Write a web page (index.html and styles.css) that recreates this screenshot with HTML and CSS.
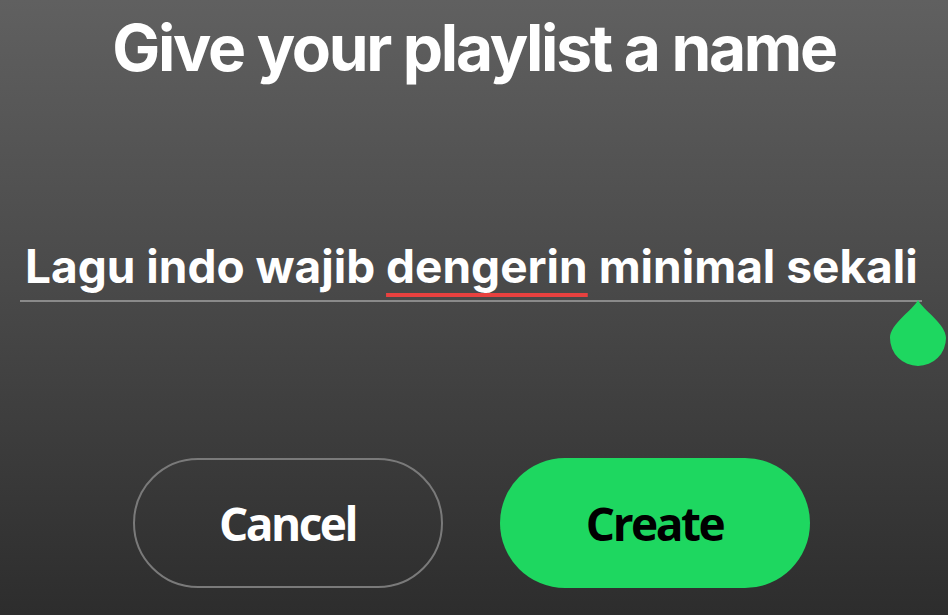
FILE: index.html
```html
<!DOCTYPE html>
<html>
<head>
<meta charset="utf-8">
<link rel="stylesheet" href="styles.css">
</head>
<body>
<main class="dialog">
  <h1 class="title">Give your playlist a name</h1>
  <div class="field">
    <div class="input-text">Lagu indo wajib <span class="misspelled">dengerin</span> minimal sekali</div>
    <div class="input-line"></div>
    <svg class="handle" width="56" height="66" viewBox="0 0 56 66">
      <path d="M28 0 C33 10 56 24 56 38 A28 28 0 0 1 0 38 C0 24 23 10 28 0 Z" fill="#1ed760"/>
    </svg>
  </div>
  <div class="actions">
    <button class="btn btn-cancel">Cancel</button>
    <button class="btn btn-create">Create</button>
  </div>
</main>
</body>
</html>
```
FILE: styles.css
```css
html, body {
  margin: 0;
  height: 100%;
}
body {
  background: linear-gradient(180deg, #606060 0%, #4a4a4a 45%, #2d2d2d 100%);
  font-family: Inter, "Noto Sans", sans-serif;
  color: #fff;
  overflow: hidden;
}
.dialog {
  display: flex;
  flex-direction: column;
  align-items: center;
  height: 615px;
}
.title {
  margin: 8px 0 0;
  font-size: 64px;
  font-weight: 700;
  letter-spacing: -2.3px;
  line-height: 80px;
  text-align: center;
}
.field {
  position: relative;
  width: 902px;
  margin-top: 150px;
  margin-left: -6px;
}
.input-text {
  font-size: 46px;
  font-weight: 700;
  letter-spacing: 0;
  line-height: 56px;
  padding-left: 5px;
  white-space: nowrap;
}
.misspelled {
  text-decoration: underline;
  text-decoration-color: #e8413f;
  text-decoration-thickness: 4px;
  text-underline-offset: 10px;
}
.input-line {
  height: 2px;
  background: #8a8a8a;
  margin-top: 6px;
}
.handle {
  position: absolute;
  right: -24px;
  top: 62px;
}
.actions {
  display: flex;
  gap: 57px;
  margin-top: 156px;
  margin-left: -6px;
}
.btn {
  width: 310px;
  height: 130px;
  border-radius: 65px;
  font-family: "Open Sans", sans-serif;
  font-size: 46px;
  font-weight: 700;
  letter-spacing: -2.5px;
  cursor: pointer;
}
.btn-cancel {
  background: transparent;
  border: 2px solid #7a7a7a;
  color: #fff;
}
.btn-create {
  background: #1ed760;
  border: none;
  color: #000;
}
```
